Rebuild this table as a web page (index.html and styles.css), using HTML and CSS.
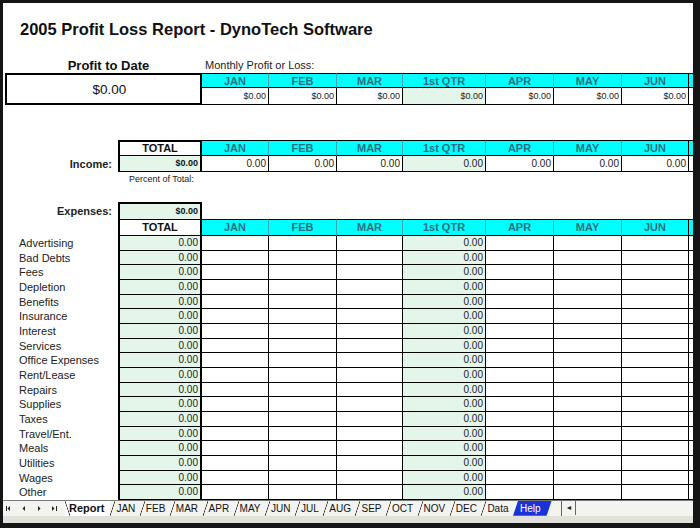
FILE: index.html
```html
<!DOCTYPE html>
<html>
<head>
<meta charset="utf-8">
<link rel="stylesheet" href="styles.css">
</head>
<body>
<div class="frame">
  <div class="sheet">
    <h1 class="title">2005 Profit Loss Report - DynoTech Software</h1>

    <div class="summary-labels">
      <div class="ptd-label">Profit to Date</div>
      <div class="monthly-label">Monthly Profit or Loss:</div>
    </div>
    <div class="grid summary-grid">
      <div class="ptd-box">$0.00</div>
      <div class="hdr">JAN</div><div class="hdr">FEB</div><div class="hdr">MAR</div><div class="hdr">1st QTR</div><div class="hdr">APR</div><div class="hdr">MAY</div><div class="hdr last">JUN</div><div class="hdr edge"></div>
      <div class="c sv">$0.00</div><div class="c sv">$0.00</div><div class="c sv">$0.00</div><div class="c sv qtr">$0.00</div><div class="c sv">$0.00</div><div class="c sv">$0.00</div><div class="c sv">$0.00</div><div class="edge-v"></div>
    </div>

    <div class="grid income-grid">
      <div></div>
      <div class="tot-h">TOTAL</div>
      <div class="hdr">JAN</div><div class="hdr">FEB</div><div class="hdr">MAR</div><div class="hdr">1st QTR</div><div class="hdr">APR</div><div class="hdr">MAY</div><div class="hdr last">JUN</div><div class="hdr edge"></div>
      <div class="rlabel">Income:</div>
      <div class="tt tv">$0.00</div>
      <div class="c iv">0.00</div><div class="c iv">0.00</div><div class="c iv">0.00</div><div class="c iv qtr">0.00</div><div class="c iv">0.00</div><div class="c iv">0.00</div><div class="c iv">0.00</div><div class="edge-v"></div>
    </div>
    <div class="pct">Percent of Total:</div>

    <div class="grid exp-grid">
      <div class="rlabel">Expenses:</div>
      <div class="tot-box">$0.00</div>
      <div class="blank"></div>
      <div></div>
      <div class="tot-h">TOTAL</div>
      <div class="hdr">JAN</div><div class="hdr">FEB</div><div class="hdr">MAR</div><div class="hdr">1st QTR</div><div class="hdr">APR</div><div class="hdr">MAY</div><div class="hdr last">JUN</div><div class="hdr edge"></div>

      <div class="lbl">Advertising</div><div class="tt dv">0.00</div><div class="c"></div><div class="c"></div><div class="c"></div><div class="c dv qtr">0.00</div><div class="c"></div><div class="c"></div><div class="c"></div><div class="e"></div>
      <div class="lbl">Bad Debts</div><div class="tt dv">0.00</div><div class="c"></div><div class="c"></div><div class="c"></div><div class="c dv qtr">0.00</div><div class="c"></div><div class="c"></div><div class="c"></div><div class="e"></div>
      <div class="lbl">Fees</div><div class="tt dv">0.00</div><div class="c"></div><div class="c"></div><div class="c"></div><div class="c dv qtr">0.00</div><div class="c"></div><div class="c"></div><div class="c"></div><div class="e"></div>
      <div class="lbl">Depletion</div><div class="tt dv">0.00</div><div class="c"></div><div class="c"></div><div class="c"></div><div class="c dv qtr">0.00</div><div class="c"></div><div class="c"></div><div class="c"></div><div class="e"></div>
      <div class="lbl">Benefits</div><div class="tt dv">0.00</div><div class="c"></div><div class="c"></div><div class="c"></div><div class="c dv qtr">0.00</div><div class="c"></div><div class="c"></div><div class="c"></div><div class="e"></div>
      <div class="lbl">Insurance</div><div class="tt dv">0.00</div><div class="c"></div><div class="c"></div><div class="c"></div><div class="c dv qtr">0.00</div><div class="c"></div><div class="c"></div><div class="c"></div><div class="e"></div>
      <div class="lbl">Interest</div><div class="tt dv">0.00</div><div class="c"></div><div class="c"></div><div class="c"></div><div class="c dv qtr">0.00</div><div class="c"></div><div class="c"></div><div class="c"></div><div class="e"></div>
      <div class="lbl">Services</div><div class="tt dv">0.00</div><div class="c"></div><div class="c"></div><div class="c"></div><div class="c dv qtr">0.00</div><div class="c"></div><div class="c"></div><div class="c"></div><div class="e"></div>
      <div class="lbl">Office Expenses</div><div class="tt dv">0.00</div><div class="c"></div><div class="c"></div><div class="c"></div><div class="c dv qtr">0.00</div><div class="c"></div><div class="c"></div><div class="c"></div><div class="e"></div>
      <div class="lbl">Rent/Lease</div><div class="tt dv">0.00</div><div class="c"></div><div class="c"></div><div class="c"></div><div class="c dv qtr">0.00</div><div class="c"></div><div class="c"></div><div class="c"></div><div class="e"></div>
      <div class="lbl">Repairs</div><div class="tt dv">0.00</div><div class="c"></div><div class="c"></div><div class="c"></div><div class="c dv qtr">0.00</div><div class="c"></div><div class="c"></div><div class="c"></div><div class="e"></div>
      <div class="lbl">Supplies</div><div class="tt dv">0.00</div><div class="c"></div><div class="c"></div><div class="c"></div><div class="c dv qtr">0.00</div><div class="c"></div><div class="c"></div><div class="c"></div><div class="e"></div>
      <div class="lbl">Taxes</div><div class="tt dv">0.00</div><div class="c"></div><div class="c"></div><div class="c"></div><div class="c dv qtr">0.00</div><div class="c"></div><div class="c"></div><div class="c"></div><div class="e"></div>
      <div class="lbl">Travel/Ent.</div><div class="tt dv">0.00</div><div class="c"></div><div class="c"></div><div class="c"></div><div class="c dv qtr">0.00</div><div class="c"></div><div class="c"></div><div class="c"></div><div class="e"></div>
      <div class="lbl">Meals</div><div class="tt dv">0.00</div><div class="c"></div><div class="c"></div><div class="c"></div><div class="c dv qtr">0.00</div><div class="c"></div><div class="c"></div><div class="c"></div><div class="e"></div>
      <div class="lbl">Utilities</div><div class="tt dv">0.00</div><div class="c"></div><div class="c"></div><div class="c"></div><div class="c dv qtr">0.00</div><div class="c"></div><div class="c"></div><div class="c"></div><div class="e"></div>
      <div class="lbl">Wages</div><div class="tt dv">0.00</div><div class="c"></div><div class="c"></div><div class="c"></div><div class="c dv qtr">0.00</div><div class="c"></div><div class="c"></div><div class="c"></div><div class="e"></div>
      <div class="lbl">Other</div><div class="tt dv">0.00</div><div class="c"></div><div class="c"></div><div class="c"></div><div class="c dv qtr">0.00</div><div class="c"></div><div class="c"></div><div class="c"></div><div class="e"></div>
    </div>

    <div class="tabbar">
      <div class="nav">
        <svg width="62" height="15" viewBox="0 0 62 15">
          <g fill="#222">
            <rect x="3" y="5" width="1" height="5"/>
            <polygon points="7,5 7,10 4.5,7.5"/>
            <polygon points="22,5 22,10 19.5,7.5"/>
            <polygon points="35,5 35,10 37.5,7.5"/>
            <polygon points="49,5 49,10 51.5,7.5"/>
            <rect x="53" y="5" width="1" height="5"/>
          </g>
        </svg>
      </div>
      <div class="tabs">
        <span class="tab active">Report</span>
        <span class="tab">JAN</span>
        <span class="tab">FEB</span>
        <span class="tab">MAR</span>
        <span class="tab">APR</span>
        <span class="tab">MAY</span>
        <span class="tab">JUN</span>
        <span class="tab">JUL</span>
        <span class="tab">AUG</span>
        <span class="tab">SEP</span>
        <span class="tab">OCT</span>
        <span class="tab">NOV</span>
        <span class="tab">DEC</span>
        <span class="tab">Data</span>
        <span class="tab help">Help</span>
      </div>
      <div class="scroll"><span class="sbtn">&#9668;</span></div>
    </div>
    <div class="bottom-strip"></div>
  </div>
</div>
</body>
</html>
```
FILE: styles.css
```css
* { box-sizing: border-box; }
html, body { margin: 0; padding: 0; }
body {
  width: 700px;
  height: 528px;
  overflow: hidden;
  background: #141414;
  font-family: "Liberation Sans", Arial, sans-serif;
  color: #111;
}
.frame {
  width: 700px;
  height: 528px;
  padding: 3px 7px 5px 3px;
  background: #151515;
}
.sheet {
  width: 690px;
  height: 520px;
  background: #fff;
  display: flex;
  flex-direction: column;
  overflow: hidden;
}
.title {
  margin: 16px 0 19px 17px;
  height: 20px;
  font-size: 16.5px;
  line-height: 20px;
  font-weight: bold;
  color: #111;
}

.grid {
  display: grid;
  grid-template-columns: 115px 84px 67px 68px 66px 83px 68px 68px 67px 4px;
}

/* summary */
.summary-labels {
  display: flex;
  height: 15px;
}
.ptd-label {
  width: 199px;
  padding-left: 12px;
  text-align: center;
  font-size: 13px;
  line-height: 15px;
  font-weight: bold;
}
.monthly-label {
  padding-left: 3px;
  font-size: 11px;
  line-height: 15px;
  color: #222;
}
.summary-grid {
  grid-template-rows: 15px 17px;
}
.ptd-box {
  grid-column: 1 / 3;
  grid-row: 1 / 3;
  margin-left: 2px;
  border: 2px solid #000;
  display: flex;
  align-items: center;
  justify-content: center;
  padding-left: 12px;
  font-size: 13.5px;
}

.hdr {
  background: #00ffff;
  color: #2a6f80;
  font-weight: bold;
  font-size: 11px;
  line-height: 14px;
  text-align: center;
  border-top: 1px solid #000;
  border-bottom: 1px solid #000;
  border-right: 1px solid #3aa9b0;
}
.hdr.last { border-right-color: #000; }
.hdr.edge { border-right: none; }

.c {
  border-right: 1px solid #000;
  border-bottom: 1px solid #000;
  text-align: right;
  padding-right: 2px;
}
.qtr { background: #e4f6ea; }
.sv {
  font-size: 9px;
  line-height: 16px;
  color: #222;
}
.edge-v { border-bottom: 1px solid #000; }

/* income */
.income-grid {
  margin-top: 35px;
  grid-template-rows: 16px 16px;
}
.tot-h {
  background: #fff;
  border: 1px solid #000;
  border-left-width: 2px;
  border-right-width: 2px;
  font-weight: bold;
  font-size: 11px;
  line-height: 14px;
  text-align: center;
}
.income-grid .tot-h { border-top-width: 2px; line-height: 13px; }
.rlabel {
  text-align: right;
  padding-right: 6px;
  font-weight: bold;
  font-size: 11px;
  line-height: 17px;
  color: #222;
}
.tt {
  background: #e4f6ea;
  border-left: 2px solid #000;
  border-right: 2px solid #000;
  border-bottom: 1px solid #000;
  text-align: right;
  padding-right: 2px;
}
.tv {
  font-size: 9px;
  font-weight: bold;
  line-height: 15px;
}
.iv {
  font-size: 10px;
  line-height: 16px;
  color: #222;
}
.pct {
  margin: 2px 0 0 126px;
  height: 11px;
  font-size: 9px;
  line-height: 11px;
  color: #222;
}

/* expenses */
.exp-grid {
  margin-top: 17px;
  grid-template-rows: 17px 17px;
  grid-auto-rows: 14.667px;
}
.exp-grid .rlabel { line-height: 19px; }
.tot-box {
  background: #e4f6ea;
  border: 2px solid #000;
  border-bottom: none;
  font-size: 9px;
  font-weight: bold;
  line-height: 15px;
  text-align: right;
  padding-right: 2px;
}
.blank { grid-column: 3 / 11; }
.exp-grid .tot-h { line-height: 15px; }
.exp-grid .hdr { line-height: 15px; }
.lbl {
  padding-left: 16px;
  font-size: 11px;
  line-height: 14.667px;
  color: #222;
  white-space: nowrap;
}
.dv {
  font-size: 10px;
  line-height: 14px;
  color: #222;
}
.e { border-bottom: 1px solid #000; }

/* tab bar */
.tabbar {
  height: 16px;
  flex: none;
  display: flex;
  background: #f3f3ef;
  border-top: 1px solid #777;
}
.nav {
  width: 62px;
  flex: none;
}
.nav svg { display: block; }
.tabs {
  width: 496px;
  flex: none;
  display: flex;
}
.tab {
  position: relative;
  padding: 0 4.5px 0 6px;
  font-size: 10px;
  line-height: 15px;
  color: #111;
  white-space: nowrap;
}
.tab::before {
  content: "";
  position: absolute;
  left: 0;
  top: 0;
  width: 5px;
  height: 15px;
  background: linear-gradient(to bottom right, transparent calc(50% - 0.7px), #333 50%, transparent calc(50% + 0.7px));
}
.tab.active {
  padding: 0 6px 0 4px;
  font-size: 11px;
  font-weight: bold;
  background: #fff;
}
.tab.active::before {
  background: linear-gradient(to bottom left, transparent calc(50% - 0.7px), #333 50%, transparent calc(50% + 0.7px));
}
.tab.help {
  padding: 0 11px 0 7px;
  color: #fff;
  background: #1a33d8;
  clip-path: polygon(5px 0, 100% 0, calc(100% - 5px) 100%, 0 100%);
}
.tab.help::before { display: none; }
.scroll {
  flex: 1;
  display: flex;
  border-left: 1px solid #666;
  padding-left: 1px;
}
.sbtn {
  width: 13px;
  height: 14px;
  border-right: 1px solid #666;
  font-size: 7px;
  line-height: 14px;
  text-align: center;
  color: #222;
}
.bottom-strip {
  flex: 1;
  background: #e2e0da;
}
```
